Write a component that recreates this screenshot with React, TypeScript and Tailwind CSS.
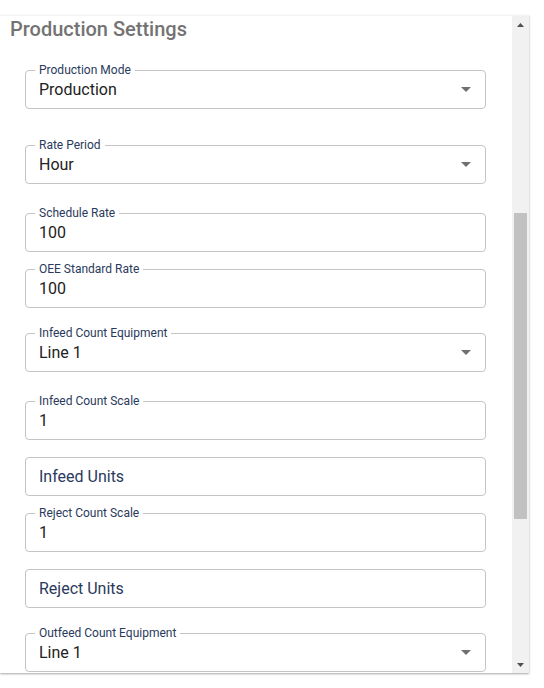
import React from 'react';

type Field = {
  label?: string;
  value?: string;
  placeholder?: string;
  select?: boolean;
  mt: string;
};

const fields: Field[] = [
  { label: 'Production Mode', value: 'Production', select: true, mt: 'mt-[27px]' },
  { label: 'Rate Period', value: 'Hour', select: true, mt: 'mt-[36px]' },
  { label: 'Schedule Rate', value: '100', mt: 'mt-[29px]' },
  { label: 'OEE Standard Rate', value: '100', mt: 'mt-[17px]' },
  { label: 'Infeed Count Equipment', value: 'Line 1', select: true, mt: 'mt-[25px]' },
  { label: 'Infeed Count Scale', value: '1', mt: 'mt-[29px]' },
  { placeholder: 'Infeed Units', mt: 'mt-[17px]' },
  { label: 'Reject Count Scale', value: '1', mt: 'mt-[17px]' },
  { placeholder: 'Reject Units', mt: 'mt-[17px]' },
  { label: 'Outfeed Count Equipment', value: 'Line 1', select: true, mt: 'mt-[25px]' },
];

const OutlinedField: React.FC<{ field: Field }> = ({ field }) => (
  <div
    className={`relative ${field.mt} ml-[25px] mr-[26px] h-[39px] shrink-0 rounded-[4px] border border-[#c4c4c4] flex items-center pl-[13px] pr-[14px]`}
  >
    {field.label && (
      <span className="absolute -top-[8px] left-[9px] bg-white px-[4px] text-[12px] leading-[14px] text-[#2a3a5c]">
        {field.label}
      </span>
    )}
    <span
      className={`flex-1 text-[16px] leading-[20px] ${
        field.placeholder ? 'text-[#2a3a5c]' : 'text-[#222222]'
      }`}
    >
      {field.value ?? field.placeholder}
    </span>
    {field.select && (
      <svg width="10" height="5" viewBox="0 0 10 5">
        <path d="M0 0 L10 0 L5 5 Z" fill="#707070" />
      </svg>
    )}
  </div>
);

const App: React.FC = () => {
  return (
    <div className="w-[544px] h-[688px] bg-white pt-[15px] font-['Roboto','Liberation_Sans',sans-serif]">
      <div className="flex w-[529px] h-[658px] bg-white border-t border-[#f4f4f4] shadow-[0_1px_2px_rgba(0,0,0,0.35)]">
        <div className="flex-1 flex flex-col overflow-hidden">
          <h2 className="pl-[10px] text-[20px] leading-[27px] font-medium text-[#737373] shrink-0">
            Production Settings
          </h2>
          {fields.map((f) => (
            <OutlinedField key={f.label ?? f.placeholder} field={f} />
          ))}
        </div>
        <div className="w-[17px] bg-[#f1f1f1] flex flex-col items-center">
          <div className="h-[17px] flex items-center justify-center">
            <svg width="7" height="4" viewBox="0 0 7 4">
              <path d="M0 4 L7 4 L3.5 0 Z" fill="#505050" />
            </svg>
          </div>
          <div className="mt-[180px] w-[13px] h-[306px] bg-[#c1c1c1]" />
          <div className="flex-1" />
          <div className="h-[17px] flex items-center justify-center">
            <svg width="7" height="4" viewBox="0 0 7 4">
              <path d="M0 0 L7 0 L3.5 4 Z" fill="#505050" />
            </svg>
          </div>
        </div>
      </div>
    </div>
  );
};

export default App;
